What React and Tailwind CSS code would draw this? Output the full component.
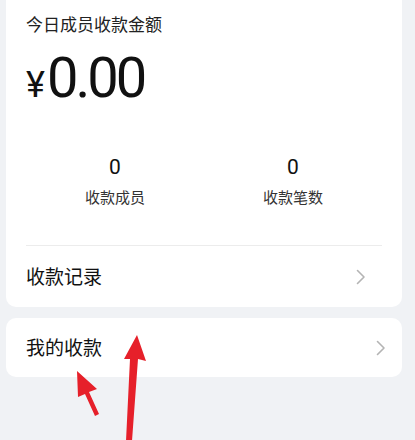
const cjk = { fontFamily: '"Noto Sans CJK SC", "Noto Sans", sans-serif' }

function Chevron() {
  return (
    <svg width="10" height="16" viewBox="0 0 10 16" fill="none">
      <polyline points="1.5,1.5 8,8 1.5,14.5" stroke="#b4b4b4" strokeWidth="1.6" strokeLinecap="round" strokeLinejoin="round" />
    </svg>
  )
}

function Stat({ value, label }) {
  return (
    <div className="flex flex-col items-center">
      <div className="font-['Roboto'] text-[21px] leading-7 text-[#111]">{value}</div>
      <div className="mt-[6px] text-[15px] leading-5 text-[#333]" style={cjk}>{label}</div>
    </div>
  )
}

export default function App() {
  return (
    <div className="relative min-h-[440px] bg-[#f0f2f5] pl-[6px] pr-[13px]" style={cjk}>
      <div className="bg-white rounded-b-[10px] px-5 pt-3">
        <div className="text-[17px] leading-6 text-[#222]">今日成员收款金额</div>
        <div className="mt-[13px] flex items-baseline font-['Roboto'] text-[#111]">
          <span className="text-[36px] leading-[58px] mr-[2px]">¥</span>
          <span className="text-[56px] leading-[58px] tracking-[-3px]">0.00</span>
        </div>
        <div className="mt-[39px] grid grid-cols-2">
          <Stat value="0" label="收款成员" />
          <Stat value="0" label="收款笔数" />
        </div>
        <div className="mt-[38px] border-t border-[#ececec]" />
        <div className="h-[61px] flex items-center justify-between">
          <span className="text-[19px] text-[#111]">收款记录</span>
          <span className="mr-4"><Chevron /></span>
        </div>
      </div>

      <div className="mt-[11px] h-[59px] bg-white rounded-[10px] pl-5 pr-4 flex items-center justify-between">
        <span className="text-[19px] text-[#111]">我的收款</span>
        <Chevron />
      </div>

      <svg className="absolute left-0 top-0 pointer-events-none" width="415" height="440" viewBox="0 0 415 440">
        <polygon points="77,371 97,389 89,392 99,414 95,416 85,394 78,397" fill="#e6202a" />
        <polygon points="137,335 146,361 138,359 132,441 126,441 130,359 124,359" fill="#e6202a" />
      </svg>
    </div>
  )
}
